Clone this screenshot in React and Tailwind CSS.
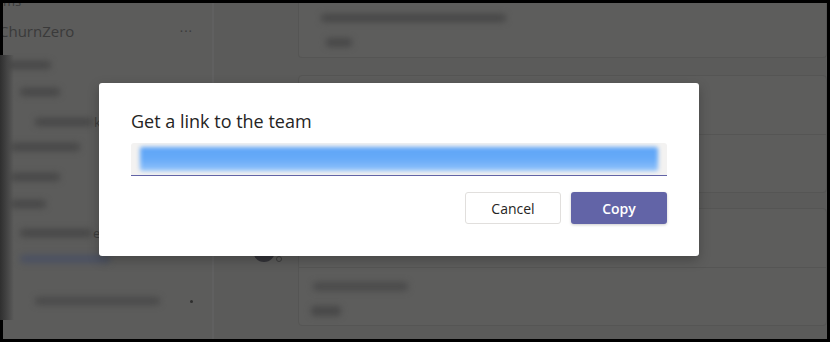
import React from 'react';

const FONT = { fontFamily: '"Open Sans", "Noto Sans", Arial, sans-serif' };

// blurred placeholder rows in the dimmed sidebar
const SIDEBAR_ROWS = [
  { mt: 'mt-[20px]', ml: 'ml-[2px]', w: 'w-[46px]' },
  { mt: 'mt-[19px]', ml: 'ml-[17px]', w: 'w-[40px]' },
  { mt: 'mt-[22px]', ml: 'ml-[32px]', w: 'w-[58px]', tail: 'ke' },
  { mt: 'mt-[17px]', ml: 'ml-[7px]', w: 'w-[70px]' },
  { mt: 'mt-[22px]', ml: 'ml-[7px]', w: 'w-[50px]' },
  { mt: 'mt-[19px]', ml: 'ml-[7px]', w: 'w-[36px]' },
  { mt: 'mt-[21px]', ml: 'ml-[17px]', w: 'w-[72px]', tail: 'ew' },
  { mt: 'mt-[18px]', ml: 'ml-[17px]', w: 'w-[90px]', blue: true },
];

function SidebarRow({ row }) {
  return (
    <div className={`${row.mt} ${row.ml} flex items-center h-[8px]`}>
      <div className={`${row.w} h-[8px] rounded-sm blur-[3px] ${row.blue ? 'bg-[#4b5162]' : 'bg-[#474747]'}`} />
      {row.tail && <span className="ml-[1px] text-[13px] leading-none text-[#3c3c3c]">{row.tail}</span>}
    </div>
  );
}

function Sidebar() {
  return (
    <div className="w-[209px] shrink-0 h-full bg-[#5c5c5b] flex flex-col text-[#393939]">
      <div className="-mt-[9px] h-[14px] text-[13px] leading-[14px]">ms</div>
      <div className="mt-[13px] flex items-center justify-between pr-[19px]">
        <span className="-ml-[4px] text-[15px] leading-[20px] text-[#3a3a3a]">ChurnZero</span>
        <span className="text-[13px] leading-none tracking-[1px] text-[#3a3a3a]">···</span>
      </div>
      {SIDEBAR_ROWS.map((r, i) => <SidebarRow key={i} row={r} />)}
      <div className="mt-[34px] flex items-center">
        <div className="ml-[32px] w-[125px] h-[8px] rounded-sm blur-[3px] bg-[#4a4a4a]" />
        <div className="ml-[30px] w-[3px] h-[3px] rounded-full bg-[#2e2e2e]" />
      </div>
    </div>
  );
}

function Card({ className, children }) {
  return (
    <div className={`bg-[#5d5d5c] border border-[#555554] rounded-[4px] ${className}`}>
      {children}
    </div>
  );
}

function Main() {
  return (
    <div className="flex-1 flex h-full border-l-2 border-[#606060]">
      {/* avatar column */}
      <div className="w-[84px] shrink-0">
        <div className="mt-[242px] ml-[39px] flex items-end">
          <div className="w-[22px] h-[17px] rounded-b-full bg-[#333338]" />
          <div className="ml-[1px] w-[6px] h-[6px] rounded-full border border-[#3d3d3d]" />
        </div>
      </div>
      {/* cards */}
      <div className="flex-1 flex flex-col">
        <Card className="-mt-[2px] h-[57px] rounded-t-none border-t-0 pl-[22px]">
          <div className="mt-[13px] w-[185px] h-[8px] rounded-sm blur-[3px] bg-[#474747]" />
          <div className="mt-[16px] ml-[5px] w-[26px] h-[9px] rounded-sm blur-[3px] bg-[#484848]" />
        </Card>
        <Card className="mt-[17px] h-[118px] flex flex-col">
          <div className="h-[59px] border-b border-[#555554]" />
        </Card>
        <Card className="mt-[15px] h-[118px] flex flex-col">
          <div className="h-[59px] border-b border-[#555554]" />
          <div className="mt-[14px] ml-[14px] w-[95px] h-[9px] rounded-sm blur-[3px] bg-[#4b4b4b]" />
          <div className="mt-[15px] ml-[12px] w-[30px] h-[10px] rounded-sm blur-[3px] bg-[#484848]" />
        </Card>
      </div>
    </div>
  );
}

function LinkDialog() {
  return (
    <div className="absolute left-[99px] top-[83px] w-[600px] h-[173px] bg-white rounded-[3px] shadow-[0_4px_12px_rgba(0,0,0,0.25)] px-[32px] pt-[26px]">
      <h2 className="text-[18px] leading-[24px] text-[#252423]">Get a link to the team</h2>
      <div className="mt-[10px] h-[33px] bg-[#f3f2f1] rounded-t-[3px] border-b border-[#6264a7] px-[9px] pt-[4px] overflow-hidden">
        <div className="h-[24px] rounded-[2px] blur-[2px] bg-gradient-to-b from-[#5fa5f7] via-[#66aaf8] to-[#93c3fa]" />
      </div>
      <div className="mt-[16px] flex justify-end gap-[10px]">
        <button className="w-[96px] h-[32px] rounded-[3px] border border-[#e1dfdd] bg-white text-[14px] font-medium text-[#252423]">
          Cancel
        </button>
        <button className="w-[96px] h-[32px] rounded-[3px] bg-[#6264a7] text-[14px] font-semibold text-white shadow-[0_1px_3px_rgba(0,0,0,0.2)]">
          Copy
        </button>
      </div>
    </div>
  );
}

export default function App() {
  return (
    <div className="relative w-[830px] h-[342px] bg-black p-[3px] overflow-hidden" style={FONT}>
      <div className="flex h-full bg-[#5b5b5a] overflow-hidden">
        <Sidebar />
        <Main />
      </div>
      {/* dark blurred edge on the far left */}
      <div className="absolute left-0 top-[55px] w-[14px] h-[265px] bg-gradient-to-r from-[#2f2f2f] via-[#444444] to-transparent" />
      <LinkDialog />
    </div>
  );
}
